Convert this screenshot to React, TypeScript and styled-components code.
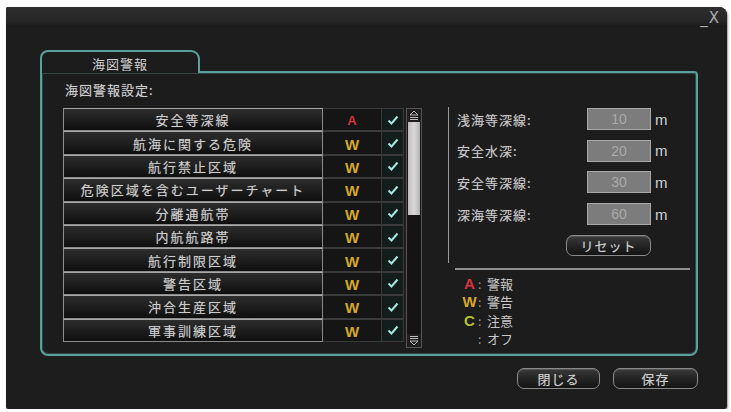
import React from 'react';
import styled, { createGlobalStyle } from 'styled-components';

const GlobalStyle = createGlobalStyle`
  html, body {
    margin: 0;
    padding: 0;
    background: #ffffff;
  }
  body {
    font-family: "Noto Sans CJK JP", "Noto Sans", sans-serif;
  }
`;

const Page = styled.div`
  padding: 7px 0 0 6px;
`;

const Window = styled.div`
  width: 721px;
  height: 402px;
  background: #1d1d1d;
  border-radius: 2px 8px 3px 2px;
  box-shadow: 1px 1px 2px rgba(0, 0, 0, 0.4);
  display: flex;
  flex-direction: column;
  overflow: hidden;
`;

const TitleBar = styled.div`
  height: 20px;
  background: linear-gradient(#2e2e2e, #262626 70%, #1a1a1a);
  display: flex;
  justify-content: flex-end;
  align-items: flex-end;
  padding-right: 8px;
  color: #a8a8a8;
`;

const WinControls = styled.div`
  display: flex;
  align-items: flex-end;
  gap: 1px;
  font-family: "DejaVu Sans", sans-serif;
  font-size: 15px;
  line-height: 18px;
`;

const Content = styled.div`
  flex: 1;
  padding: 23px 29px 0 34px;
  display: flex;
  flex-direction: column;
`;

const Tab = styled.div`
  position: relative;
  z-index: 1;
  width: 160px;
  height: 23px;
  margin-bottom: -2px;
  box-sizing: border-box;
  border: 2px solid #58a09a;
  border-bottom: none;
  border-radius: 8px 9px 0 0;
  background: #1c1c1c;
  color: #cfcfcf;
  font-size: 13px;
  letter-spacing: 1px;
  display: flex;
  justify-content: center;
  align-items: center;
  padding-top: 1px;
`;

const Panel = styled.div`
  height: 285px;
  box-sizing: border-box;
  border: 2px solid #58a09a;
  border-radius: 0 4px 8px 8px;
  box-shadow: inset 0 0 0 1px rgba(120, 190, 185, 0.25);
  background: #1c1c1c;
  padding: 8px 0 0 21px;
  display: flex;
  flex-direction: column;
`;

const Caption = styled.div`
  height: 17px;
  color: #cfcfcf;
  font-size: 13px;
  letter-spacing: 1px;
  line-height: 17px;
  padding-left: 2px;
  text-shadow: 0 0 1px rgba(255, 255, 255, 0.3);
`;

const Body = styled.div`
  margin-top: 10px;
  display: flex;
  gap: 26px;
`;

const TableArea = styled.div`
  display: flex;
  gap: 2px;
`;

const Table = styled.div`
  display: grid;
  grid-template-columns: 260px 59px 22px;
  grid-auto-rows: 23.4px;
`;

const NameCell = styled.div`
  box-sizing: border-box;
  border: 1px solid #8c8c8c;
  border-top-color: #a8a8a8;
  background: linear-gradient(#2d2d2d, #1b1b1b 60%, #0e0e0e);
  color: #cdcdcd;
  font-size: 13px;
  letter-spacing: 2px;
  display: flex;
  align-items: center;
  justify-content: center;
  white-space: nowrap;
  text-shadow: 0 0 1px rgba(255, 255, 255, 0.35);
`;

const LevelCell = styled.div<{ $tone: 'A' | 'W' }>`
  box-sizing: border-box;
  border: 1px solid #3a3a3a;
  border-left: none;
  background: #151515;
  display: flex;
  align-items: center;
  justify-content: center;
  color: ${p => (p.$tone === 'A' ? '#d8323c' : '#d6a824')};
  font-family: "Liberation Sans", sans-serif;
  font-weight: bold;
  font-size: ${p => (p.$tone === 'A' ? '13px' : '15px')};
  padding-top: 2px;
`;

const CheckCell = styled.div`
  box-sizing: border-box;
  border: 1px solid #3a3a3a;
  border-left: none;
  background: #121d1c;
  display: flex;
  align-items: center;
  justify-content: center;
`;

const ScrollBar = styled.div`
  width: 16px;
  box-sizing: border-box;
  border: 1px solid #555;
  background: #141414;
  display: flex;
  flex-direction: column;
`;

const ScrollBtn = styled.div`
  height: 13px;
  display: flex;
  align-items: center;
  justify-content: center;
  background: #1e1e1e;
`;

const ScrollTrack = styled.div`
  flex: 1;
  display: flex;
  flex-direction: column;
  padding: 0 1px;
`;

const Thumb = styled.div`
  height: 93px;
  background: linear-gradient(90deg, #bdbdbd, #d8d8d8 50%, #b4b4b4);
`;

const Settings = styled.div`
  width: 242px;
  display: flex;
  flex-direction: column;
`;

const SettingsTop = styled.div`
  height: 155px;
  margin-top: -1px;
  border-left: 1px solid #9a9a9a;
  padding: 1px 0 0 8px;
  display: flex;
  flex-direction: column;
  gap: 9.7px;
`;

const SettingRow = styled.div`
  display: grid;
  grid-template-columns: 130px 64px auto;
  align-items: center;
  height: 22px;
`;

const Label = styled.span`
  color: #c8c8c8;
  font-size: 13px;
  letter-spacing: 1px;
  text-shadow: 0 0 1px rgba(255, 255, 255, 0.3);
`;

const NumBox = styled.div`
  height: 22px;
  box-sizing: border-box;
  border: 1px solid #a9a9a9;
  background: #7c7c7c;
  color: #a9a9a9;
  font-family: "Liberation Sans", sans-serif;
  font-size: 14px;
  display: flex;
  align-items: center;
  justify-content: center;
`;

const Unit = styled.span`
  color: #d0d0d0;
  font-family: "Liberation Sans", sans-serif;
  font-size: 15px;
  padding-left: 4px;
`;

const ResetRow = styled.div`
  width: 194px;
  display: flex;
  justify-content: flex-end;
  margin-top: 0.5px;
`;

const Button = styled.div<{ $w: number }>`
  width: ${p => p.$w}px;
  height: 21px;
  box-sizing: border-box;
  border: 1px solid #8a8a8a;
  border-radius: 7px;
  background: linear-gradient(#3a3a3a, #222 55%, #141414);
  box-shadow: inset 0 1px 0 rgba(255, 255, 255, 0.15);
  color: #cfcfcf;
  font-size: 13px;
  letter-spacing: 1px;
  display: flex;
  align-items: center;
  justify-content: center;
  text-shadow: 0 0 1px rgba(255, 255, 255, 0.3);
`;

const Divider = styled.div`
  height: 2px;
  margin: 5px 0 0 7px;
  background: #8e8e8e;
`;

const Legend = styled.div`
  display: flex;
  flex-direction: column;
  padding: 4px 0 0 13px;
`;

const LegendRow = styled.div`
  height: 18.5px;
  display: flex;
  align-items: center;
  color: #c8c8c8;
  font-size: 13px;
`;

const LegendKey = styled.span<{ $color: string }>`
  width: 17px;
  text-align: center;
  color: ${p => p.$color};
  font-family: "Liberation Sans", sans-serif;
  font-size: 15px;
  font-weight: bold;
`;

const Colon = styled.span`
  width: 9px;
  color: #9a9a9a;
  font-size: 12px;
`;

const Footer = styled.div`
  margin-top: 12px;
  display: flex;
  justify-content: flex-end;
  gap: 13px;
`;

const CheckMark = () => (
  <svg width="12" height="10" viewBox="0 0 12 10">
    <path d="M1.5 5.5 L4.5 8.5 L10.5 1.5" fill="none" stroke="#a6e6df" strokeWidth="2" />
  </svg>
);

const ArrowUp = () => (
  <svg width="10" height="11" viewBox="0 0 10 11">
    <path d="M5 1 L9 5 H1 Z" fill="none" stroke="#bbb" strokeWidth="1" />
    <path d="M1 7.5 H9 M1 9.5 H9" stroke="#bbb" strokeWidth="1" />
  </svg>
);

const ArrowDown = () => (
  <svg width="10" height="11" viewBox="0 0 10 11">
    <path d="M1 1.5 H9 M1 3.5 H9" stroke="#bbb" strokeWidth="1" />
    <path d="M5 10 L9 6 H1 Z" fill="none" stroke="#bbb" strokeWidth="1" />
  </svg>
);

const rows: { name: string; level: 'A' | 'W' }[] = [
  { name: '安全等深線', level: 'A' },
  { name: '航海に関する危険', level: 'W' },
  { name: '航行禁止区域', level: 'W' },
  { name: '危険区域を含むユーザーチャート', level: 'W' },
  { name: '分離通航帯', level: 'W' },
  { name: '内航航路帯', level: 'W' },
  { name: '航行制限区域', level: 'W' },
  { name: '警告区域', level: 'W' },
  { name: '沖合生産区域', level: 'W' },
  { name: '軍事訓練区域', level: 'W' },
];

const depths = [
  { label: '浅海等深線:', value: '10' },
  { label: '安全水深:', value: '20' },
  { label: '安全等深線:', value: '30' },
  { label: '深海等深線:', value: '60' },
];

const legend = [
  { key: 'A', color: '#d8323c', text: '警報' },
  { key: 'W', color: '#d6a824', text: '警告' },
  { key: 'C', color: '#b9c424', text: '注意' },
  { key: '', color: '#c8c8c8', text: 'オフ' },
];

export default function App() {
  return (
    <>
      <GlobalStyle />
      <Page>
        <Window>
          <TitleBar>
            <WinControls>
              <span>_</span>
              <span>X</span>
            </WinControls>
          </TitleBar>
          <Content>
            <Tab>海図警報</Tab>
            <Panel>
              <Caption>海図警報設定:</Caption>
              <Body>
                <TableArea>
                  <Table>
                    {rows.map(r => (
                      <React.Fragment key={r.name}>
                        <NameCell>{r.name}</NameCell>
                        <LevelCell $tone={r.level}>{r.level}</LevelCell>
                        <CheckCell>
                          <CheckMark />
                        </CheckCell>
                      </React.Fragment>
                    ))}
                  </Table>
                  <ScrollBar>
                    <ScrollBtn>
                      <ArrowUp />
                    </ScrollBtn>
                    <ScrollTrack>
                      <Thumb />
                    </ScrollTrack>
                    <ScrollBtn>
                      <ArrowDown />
                    </ScrollBtn>
                  </ScrollBar>
                </TableArea>
                <Settings>
                  <SettingsTop>
                    {depths.map(d => (
                      <SettingRow key={d.label}>
                        <Label>{d.label}</Label>
                        <NumBox>{d.value}</NumBox>
                        <Unit>m</Unit>
                      </SettingRow>
                    ))}
                    <ResetRow>
                      <Button $w={85}>リセット</Button>
                    </ResetRow>
                  </SettingsTop>
                  <Divider />
                  <Legend>
                    {legend.map(l => (
                      <LegendRow key={l.text}>
                        <LegendKey $color={l.color}>{l.key}</LegendKey>
                        <Colon>:</Colon>
                        <span>{l.text}</span>
                      </LegendRow>
                    ))}
                  </Legend>
                </Settings>
              </Body>
            </Panel>
            <Footer>
              <Button $w={83}>閉じる</Button>
              <Button $w={85}>保存</Button>
            </Footer>
          </Content>
        </Window>
      </Page>
    </>
  );
}
